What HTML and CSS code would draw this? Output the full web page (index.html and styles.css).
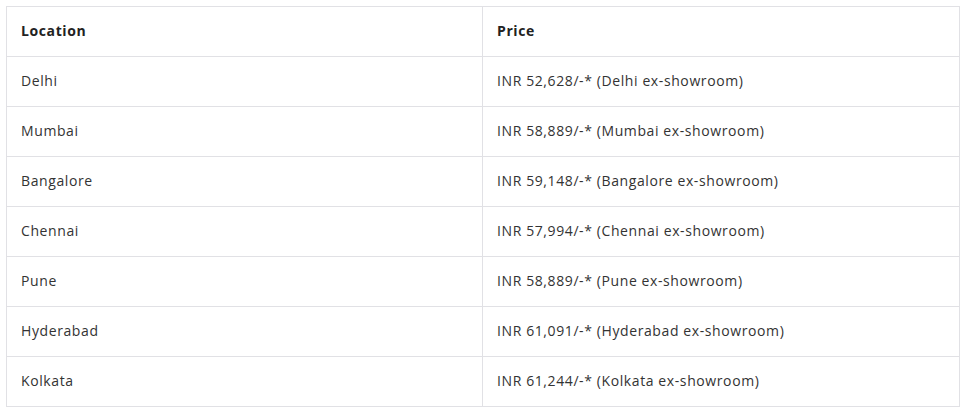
FILE: index.html
```html
<!DOCTYPE html>
<html>
<head>
<meta charset="utf-8">
<link rel="stylesheet" href="styles.css">
</head>
<body>
<table class="price-table">
  <colgroup><col class="col-loc"><col></colgroup>
  <thead>
    <tr><th>Location</th><th>Price</th></tr>
  </thead>
  <tbody>
    <tr><td>Delhi</td><td>INR 52,628/-* (Delhi ex-showroom)</td></tr>
    <tr><td>Mumbai</td><td>INR 58,889/-* (Mumbai ex-showroom)</td></tr>
    <tr><td>Bangalore</td><td>INR 59,148/-* (Bangalore ex-showroom)</td></tr>
    <tr><td>Chennai</td><td>INR 57,994/-* (Chennai ex-showroom)</td></tr>
    <tr><td>Pune</td><td>INR 58,889/-* (Pune ex-showroom)</td></tr>
    <tr><td>Hyderabad</td><td>INR 61,091/-* (Hyderabad ex-showroom)</td></tr>
    <tr><td>Kolkata</td><td>INR 61,244/-* (Kolkata ex-showroom)</td></tr>
  </tbody>
</table>
</body>
</html>
```
FILE: styles.css
```css
body {
  margin: 6px;
  background: #fff;
  font-family: "Open Sans", "DejaVu Sans", sans-serif;
}
.price-table {
  width: 954px;
  border-collapse: collapse;
  table-layout: fixed;
  font-size: 14px;
  letter-spacing: 0.6px;
  color: #333;
}
.col-loc {
  width: 476px;
}
.price-table th,
.price-table td {
  border: 1px solid #e1e1e5;
  height: 50px;
  padding: 0 14px 3px;
  text-align: left;
  vertical-align: middle;
  box-sizing: border-box;
}
.price-table th {
  font-weight: 700;
  color: #222;
  letter-spacing: 0.6px;
}
```
